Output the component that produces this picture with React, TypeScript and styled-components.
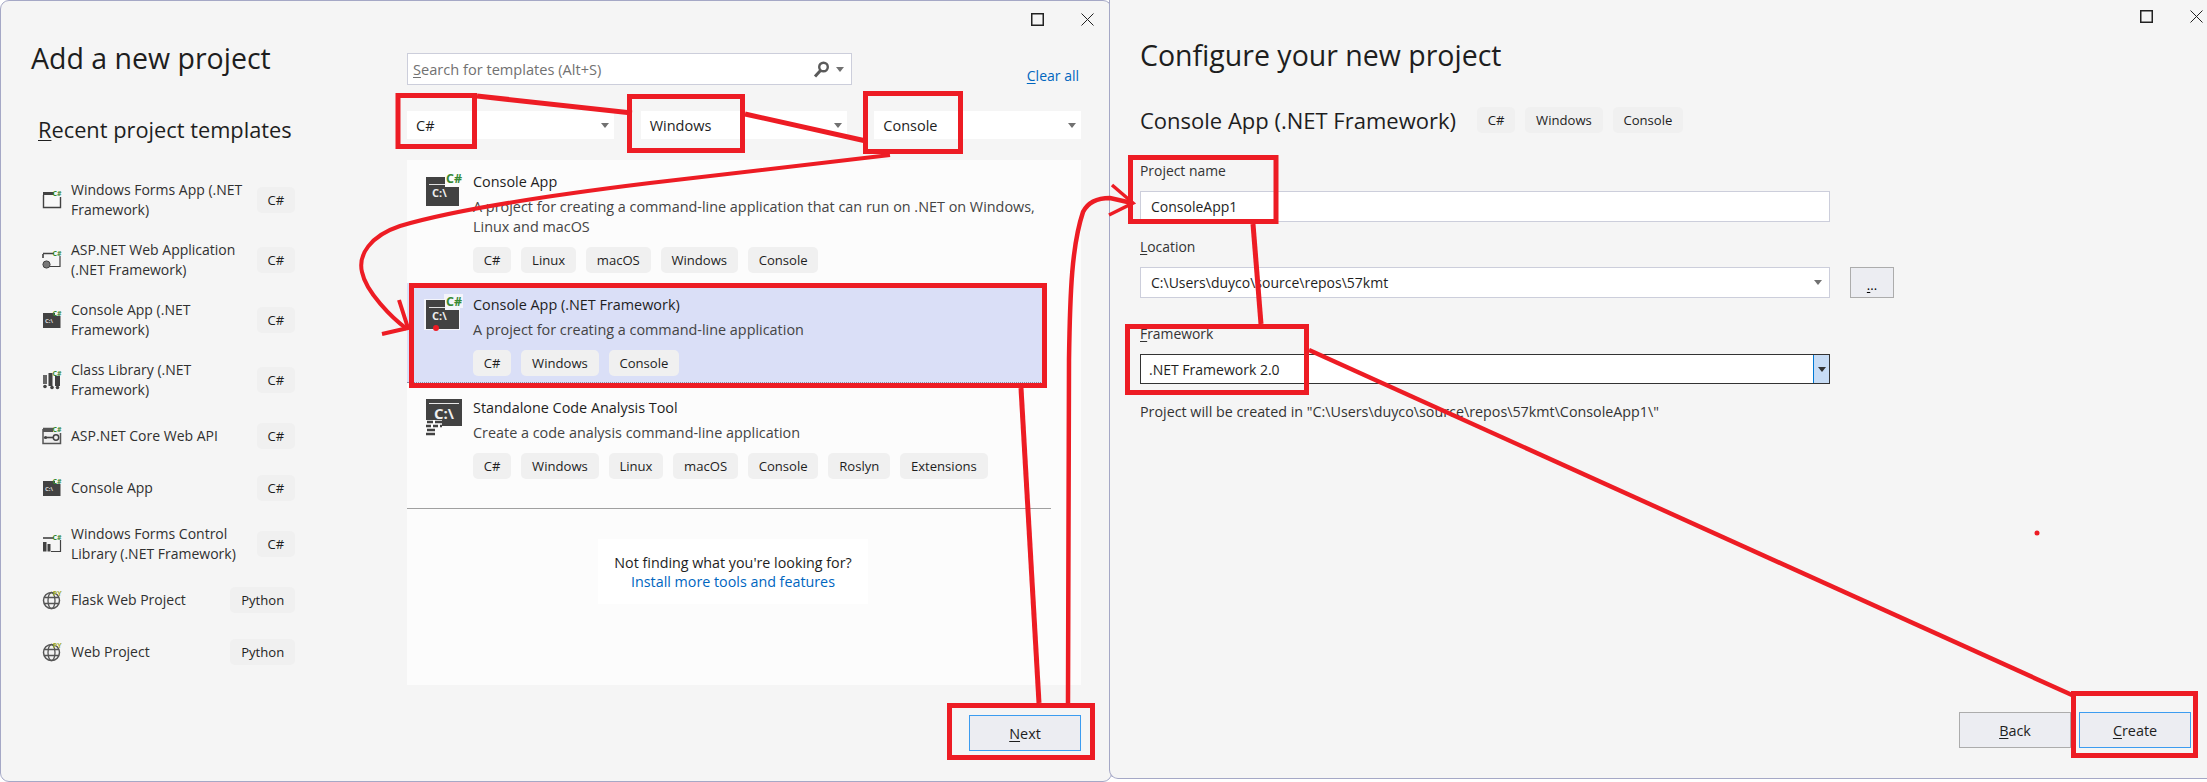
import React from "react";
import styled, { createGlobalStyle } from "styled-components";

const Global = createGlobalStyle`
  html, body { margin: 0; padding: 0; background: #fff; }
  * { box-sizing: border-box; }
  body { font-family: "Open Sans", "Noto Sans", "Liberation Sans", sans-serif; color: #1e1e1e; }
  u { text-underline-offset: 2px; text-decoration-thickness: 1px; }
`;

const Page = styled.div`
  position: relative;
  display: flex;
  align-items: flex-start;
  width: 2207px;
  height: 782px;
  overflow: hidden;
  background: #fff;
`;

const LeftWindow = styled.section`
  display: flex;
  flex: none;
  width: 1112px;
  height: 782px;
  padding-right: 3px;
  background: #f5f5f5;
  border: 1px solid #a5a8c6;
  border-radius: 9px;
`;

const RightWindow = styled.section`
  position: relative;
  display: flex;
  flex: none;
  flex-direction: column;
  width: 1098px;
  height: 779px;
  margin-left: -3px;
  padding: 0 16px 30px 30px;
  background: #f5f5f5;
  border-left: 1px solid #a5a8c6;
  border-bottom: 1px solid #a5a8c6;
  border-bottom-left-radius: 9px;
`;

const Sidebar = styled.aside`
  flex: none;
  width: 406px;
  padding: 37px 0 0 30px;
`;

const PageTitle = styled.h1`
  margin: 0;
  font-size: 28.500px;
  font-weight: 400;
  line-height: 40px;
  white-space: nowrap;
`;

const RecentHeading = styled.h2`
  margin: 37px 0 25px 7px;
  font-size: 21.800px;
  font-weight: 400;
  line-height: 30px;
  white-space: nowrap;
`;

const RecentList = styled.ul`
  margin: 0;
  padding: 0 0 0 11px;
  list-style: none;
  width: 264px;
`;

const RecentRow = styled.li<{ $tall?: boolean }>`
  display: flex;
  align-items: center;
  height: ${(p) => (p.$tall ? 60 : 52)}px;
`;

const RecentIcon = styled.svg`
  flex: none;
  width: 20px;
  height: 20px;
  margin-right: 9px;
  overflow: visible;
`;

const RecentName = styled.span`
  flex: 1;
  font-size: 14px;
  line-height: 20px;
  color: #303030;
  white-space: nowrap;
`;

const Tag = styled.span`
  display: inline-flex;
  flex: none;
  align-items: center;
  height: 26px;
  padding: 0 10.800px;
  font-size: 13.100px;
  color: #1e1e1e;
  background: #f0f0f0;
  border-radius: 5px;
  white-space: nowrap;
`;

const Main = styled.main`
  display: flex;
  flex: 1;
  flex-direction: column;
  padding: 12px 27px 0 0;
  min-width: 0;
`;

const WindowControls = styled.div<{ $gap: number; $inset: number }>`
  display: flex;
  flex: none;
  justify-content: flex-end;
  gap: ${(p) => p.$gap}px;
  height: 12px;
  margin-right: ${(p) => p.$inset}px;
`;

const RightControls = styled(WindowControls)`
  margin-top: 10px;
`;

const ControlIcon = styled.svg`
  width: 13px;
  height: 13px;
  overflow: visible;
`;

const SearchRow = styled.div`
  display: flex;
  flex: none;
  height: 32px;
  margin-top: 28px;
`;

const SearchBox = styled.div`
  display: flex;
  align-items: center;
  width: 445px;
  padding: 0 7px 0 5px;
  background: #fff;
  border: 1px solid #cccedb;
`;

const Placeholder = styled.span`
  flex: 1;
  font-size: 14.600px;
  color: #717171;
  white-space: nowrap;
`;

const SearchIcon = styled.svg`
  width: 18px;
  height: 17px;
  margin-right: 6px;
`;

const Caret = styled.i<{ $dark?: boolean }>`
  flex: none;
  width: 0;
  height: 0;
  border-left: 4px solid transparent;
  border-right: 4px solid transparent;
  border-top: 5px solid ${(p) => (p.$dark ? "#333" : "#717171")};
`;

const ClearAll = styled.a`
  align-self: flex-end;
  margin: 0 2px -1px auto;
  font-size: 14px;
  line-height: 20px;
  color: #0066bf;
  text-decoration: none;
  white-space: nowrap;
`;

const FilterRow = styled.div`
  display: grid;
  flex: none;
  grid-template-columns: repeat(3, 1fr);
  gap: 27px;
  height: 28px;
  margin-top: 26px;
`;

const FilterCombo = styled.div`
  display: flex;
  align-items: center;
  justify-content: space-between;
  padding: 0 5px 0 9px;
  font-size: 14.500px;
  background: #fff;
`;

const TemplateList = styled.div`
  flex: none;
  height: 525px;
  margin-top: 21px;
  background: #fcfcfc;
`;

const Template = styled.article<{ $selected?: boolean }>`
  display: flex;
  width: 640px;
  padding: 12px 10px ${(p) => (p.$selected ? 6 : 10)}px 19px;
  margin-bottom: ${(p) => (p.$selected ? 3 : 0)}px;
  background: ${(p) => (p.$selected ? "#dadff7" : "transparent")};
  border-bottom: ${(p) => (p.$selected ? "1px dotted #8a8fa8" : "none")};
`;

const TemplateIcon = styled.svg`
  flex: none;
  width: 36px;
  height: 34px;
  margin: 1px 11px 0 0;
  overflow: visible;
`;

const TemplateBody = styled.div`
  flex: 1;
  min-width: 0;
`;

const TemplateName = styled.div`
  font-size: 14.400px;
  line-height: 20px;
  white-space: nowrap;
`;

const TemplateDesc = styled.div`
  margin-top: 5px;
  font-size: 14.400px;
  line-height: 20px;
  color: #444;
  white-space: nowrap;
`;

const TagRow = styled.div`
  display: flex;
  gap: 10px;
  margin-top: 10px;
`;

const ListDivider = styled.hr`
  width: 644px;
  height: 1px;
  margin: 19px 0 0;
  background: #a0a0a0;
  border: 0;
`;

const NotFinding = styled.div`
  display: flex;
  flex-direction: column;
  align-items: center;
  justify-content: center;
  width: 270px;
  height: 65px;
  margin: 30px 0 0 191px;
  font-size: 14.300px;
  line-height: 19px;
  background: #fff;
`;

const InstallLink = styled.a`
  color: #0066bf;
  text-decoration: none;
`;

const Footer = styled.div<{ $auto?: boolean }>`
  display: flex;
  flex: none;
  justify-content: flex-end;
  gap: 8px;
  margin-top: ${(p) => (p.$auto ? "auto" : "30px")};
`;

const DialogButton = styled.button<{ $primary?: boolean }>`
  width: 112px;
  height: 36px;
  padding: 0;
  font: inherit;
  font-size: 14.400px;
  color: #1e1e1e;
  background: #ecedf2;
  border: 1px solid ${(p) => (p.$primary ? "#3c9cf0" : "#acacac")};
`;

const ConfigTitle = styled(PageTitle)`
  margin-top: 13px;
`;

const SubtitleRow = styled.div`
  display: flex;
  align-items: center;
  gap: 10px;
  height: 26px;
  margin-top: 32px;
`;

const Subtitle = styled.h2`
  margin: 0 11px 0 0;
  font-size: 22px;
  font-weight: 400;
  white-space: nowrap;
`;

const FieldLabel = styled.label<{ $top: number }>`
  display: block;
  margin-top: ${(p) => p.$top}px;
  font-size: 13.900px;
  line-height: 20px;
  color: #333;
`;

const FieldRow = styled.div`
  display: flex;
  margin-top: 10px;
`;

const Field = styled.div<{ $focus?: boolean; $h?: number }>`
  display: flex;
  align-items: center;
  width: 690px;
  height: ${(p) => p.$h ?? 31}px;
  padding: 0 ${(p) => (p.$focus ? 0 : 7)}px 0 ${(p) => (p.$focus ? 8 : 10)}px;
  font-size: 14px;
  background: #fff;
  border: 1px solid ${(p) => (p.$focus ? "#333" : "#cccedb")};
`;

const FieldValue = styled.span`
  flex: 1;
  white-space: nowrap;
`;

const DropButton = styled.span`
  display: flex;
  flex: none;
  align-items: center;
  justify-content: center;
  align-self: stretch;
  width: 16px;
  background: #c7dcf5;
  border-left: 1px solid #0078d4;
`;

const BrowseButton = styled.button`
  width: 44px;
  height: 31px;
  margin-left: 20px;
  padding: 6px 0 0;
  font: inherit;
  font-size: 13px;
  line-height: 1;
  background: #ecedf2;
  border: 1px solid #acacac;
`;

const CreatedIn = styled.p`
  margin: 18px 0 0;
  font-size: 14.300px;
  line-height: 20px;
  color: #333;
  white-space: nowrap;
`;

const Annotations = styled.svg`
  position: absolute;
  top: 0;
  left: 0;
  width: 2207px;
  height: 782px;
  pointer-events: none;
`;

const GREEN = "#388a34";
const DARK = "#424242";
const OLIVE = "#a2ad33";

const SmallBadge = ({ text = "C#", color = GREEN }: { text?: string; color?: string }) => (
  <text x="19.500" y="5.500" textAnchor="end" fontSize="7" fontWeight="700" fontFamily="Open Sans, sans-serif" fill={color}>
    {text}
  </text>
);

type SmallKind = "forms" | "web" | "console" | "lib" | "api" | "control" | "globe";

const SmallGlyph = ({ kind }: { kind: SmallKind }) => {
  switch (kind) {
    case "forms":
      return (
        <g>
          <rect x="1" y="2" width="11" height="3" fill={DARK} />
          <path d="M1.500 5v12.500h17V7" fill="#f8f8f8" stroke={DARK} strokeWidth="1.400" />
          <SmallBadge />
        </g>
      );
    case "web":
      return (
        <g>
          <path d="M1 3.500h11M1 4v4" stroke={DARK} strokeWidth="1.600" fill="none" />
          <path d="M18 6v10.500H8" stroke={DARK} strokeWidth="1.200" fill="none" />
          <circle cx="4.500" cy="14.500" r="3.600" fill="#777" stroke={DARK} />
          <SmallBadge />
        </g>
      );
    case "console":
      return (
        <g>
          <path d="M1 3h12v3h5.500v12H1z" fill={DARK} />
          <text x="3" y="13" fontSize="6" fontWeight="700" fontFamily="Open Sans, sans-serif" fill="#ddd">C:\</text>
          <SmallBadge />
        </g>
      );
    case "lib":
      return (
        <g>
          <rect x="1" y="5" width="4" height="9" fill="#666" />
          <rect x="6.500" y="3" width="4" height="13" fill={DARK} />
          <rect x="13" y="6" width="5" height="10" fill={DARK} />
          <circle cx="3" cy="16.500" r="1.800" fill={DARK} />
          <circle cx="10" cy="17.500" r="1.800" fill={DARK} />
          <circle cx="15.500" cy="17.500" r="1.800" fill={DARK} />
          <SmallBadge />
        </g>
      );
    case "api":
      return (
        <g>
          <path d="M1 2.500h11M1 3v14.500h17.500V7" fill="#eee" stroke="#555" strokeWidth="1.500" />
          <rect x="1" y="3" width="10" height="3" fill="#555" />
          <path d="M4 11.500h7" stroke={DARK} strokeWidth="1.600" />
          <circle cx="3.500" cy="11.500" r="1.600" fill={DARK} />
          <circle cx="14" cy="11.500" r="2.700" fill="none" stroke={DARK} strokeWidth="1.500" />
          <SmallBadge />
        </g>
      );
    case "control":
      return (
        <g>
          <path d="M1 4h11" stroke={DARK} strokeWidth="1.600" />
          <path d="M18.500 6v11.500H9" stroke={DARK} strokeWidth="1.200" fill="none" />
          <rect x="1" y="8" width="3.500" height="9.500" fill={DARK} />
          <rect x="5.500" y="10" width="3" height="7.500" fill={DARK} />
          <SmallBadge />
        </g>
      );
    default:
      return (
        <g>
          <circle cx="9.500" cy="10.500" r="8" fill="#f3f3f3" stroke="#555" strokeWidth="1.500" />
          <ellipse cx="9.500" cy="10.500" rx="3.500" ry="8" fill="none" stroke="#555" strokeWidth="1.300" />
          <path d="M2 7.500h15M2 13.500h15" stroke="#555" strokeWidth="1.300" />
          <SmallBadge text="PY" color={OLIVE} />
        </g>
      );
  }
};

const recent: { lines: string[]; kind: SmallKind; tag: string }[] = [
  { lines: ["Windows Forms App (.NET", "Framework)"], kind: "forms", tag: "C#" },
  { lines: ["ASP.NET Web Application", "(.NET Framework)"], kind: "web", tag: "C#" },
  { lines: ["Console App (.NET", "Framework)"], kind: "console", tag: "C#" },
  { lines: ["Class Library (.NET", "Framework)"], kind: "lib", tag: "C#" },
  { lines: ["ASP.NET Core Web API"], kind: "api", tag: "C#" },
  { lines: ["Console App"], kind: "console", tag: "C#" },
  { lines: ["Windows Forms Control", "Library (.NET Framework)"], kind: "control", tag: "C#" },
  { lines: ["Flask Web Project"], kind: "globe", tag: "Python" },
  { lines: ["Web Project"], kind: "globe", tag: "Python" },
];

const ConsoleGlyph = ({ halo }: { halo?: boolean }) => (
  <TemplateIcon viewBox="0 0 36 34">
    {halo && <path d="M-2 3h20V-2h19v14h-3v22H-2z" fill="#f4f5fb" />}
    <path d="M0 4h19v10h14v19H0z" fill={DARK} />
    <path d="M3 11.500h27" stroke="#e0e0e0" strokeWidth="1" />
    <text x="6" y="24" fontSize="11" fontWeight="700" fontFamily="Open Sans, sans-serif" fill="#eee">C:\</text>
    <rect x="19" y="-1" width="17" height="13" fill={halo ? "#f4f5fb" : "#fcfcfc"} />
    <text x="36" y="10" textAnchor="end" fontSize="12.500" fontWeight="700" fontFamily="Open Sans, sans-serif" fill={GREEN}>C#</text>
  </TemplateIcon>
);

const AnalysisGlyph = () => (
  <TemplateIcon viewBox="0 0 36 34">
    <rect x="0" y="0" width="36" height="27" fill={DARK} />
    <path d="M3 4.500h30" stroke="#e8e8e8" strokeWidth="1" />
    <text x="8" y="20" fontSize="15" fontWeight="700" fontFamily="Open Sans, sans-serif" fill="#eee">C:\</text>
    <path d="M0 21h16v14H0z" fill="#fcfcfc" />
    <path d="M1 23h6M9 23h7M0 27h5M7 27h5M14 27h2M1 31h8M0 35h9" stroke={DARK} strokeWidth="2.500" />
  </TemplateIcon>
);

const Red = "#ed1c24";

const Markup = () => (
  <Annotations viewBox="0 0 2207 782">
    <g fill="none" stroke={Red} strokeWidth="5" strokeLinejoin="miter">
      <rect x="398" y="95.500" width="76.500" height="51" />
      <rect x="629.500" y="96.500" width="113" height="54" />
      <rect x="865.500" y="93.500" width="95" height="58" />
      <rect x="411.500" y="285.500" width="633" height="100" />
      <rect x="949.500" y="705.500" width="143" height="52" />
      <rect x="1130.500" y="157.500" width="145.500" height="64" />
      <rect x="1127.500" y="326.500" width="179" height="66" />
      <rect x="2073.500" y="693.500" width="122" height="62" />
      <path d="M477 96 L632 113" />
      <path d="M745 114 L866 141" />
      <path d="M890 155 L650 183 Q470 205 400 226 C370 236 358 255 362 272 C366 292 392 318 407 329" strokeWidth="4" />
      <path d="M399 300 L408 328 L382 334" strokeWidth="4" />
      <path d="M1021 388 L1039 703" />
      <path d="M1068 703 L1069 360 C1070 290 1072 245 1083 212 Q1090 198 1110 198 L1132 203" strokeWidth="4.500" />
      <path d="M1112 185 L1133 203 L1109 215" strokeWidth="3.500" />
      <path d="M1253 224 L1261 324" />
      <path d="M1309 350 L2072 695" strokeWidth="4.500" />
    </g>
    <circle cx="436" cy="328" r="3" fill={Red} />
    <circle cx="2037" cy="533" r="2.500" fill={Red} />
  </Annotations>
);

const Maximize = () => (
  <ControlIcon viewBox="0 0 13 13">
    <rect x="0.750" y="0.750" width="11.500" height="11.500" fill="none" stroke="#222" strokeWidth="1.500" />
  </ControlIcon>
);

const Close = () => (
  <ControlIcon viewBox="0 0 13 13">
    <path d="M0.500 0.500l12 12M12.500 0.500l-12 12" stroke="#222" strokeWidth="1" fill="none" />
  </ControlIcon>
);

export default function App() {
  return (
    <Page>
      <Global />
      <LeftWindow>
        <Sidebar>
          <PageTitle>Add a new project</PageTitle>
          <RecentHeading>
            <u>R</u>ecent project templates
          </RecentHeading>
          <RecentList>
            {recent.map((r, i) => (
              <RecentRow key={i} $tall={r.lines.length > 1}>
                <RecentIcon viewBox="0 0 20 20">
                  <SmallGlyph kind={r.kind} />
                </RecentIcon>
                <RecentName>
                  {r.lines.map((l, j) => (
                    <React.Fragment key={j}>
                      {j > 0 && <br />}
                      {l}
                    </React.Fragment>
                  ))}
                </RecentName>
                <Tag>{r.tag}</Tag>
              </RecentRow>
            ))}
          </RecentList>
        </Sidebar>
        <Main>
          <WindowControls $gap={37} $inset={-13}>
            <Maximize />
            <Close />
          </WindowControls>
          <SearchRow>
            <SearchBox>
              <Placeholder>
                <u>S</u>earch for templates (Alt+S)
              </Placeholder>
              <SearchIcon viewBox="0 0 18 17">
                <circle cx="11.500" cy="6" r="4.300" fill="none" stroke="#5a5a5a" strokeWidth="2.400" />
                <path d="M8.500 9.500L3 15.500" stroke="#5a5a5a" strokeWidth="3" />
              </SearchIcon>
              <Caret />
            </SearchBox>
            <ClearAll>
              <u>C</u>lear all
            </ClearAll>
          </SearchRow>
          <FilterRow>
            <FilterCombo>
              C#
              <Caret />
            </FilterCombo>
            <FilterCombo>
              Windows
              <Caret />
            </FilterCombo>
            <FilterCombo>
              Console
              <Caret />
            </FilterCombo>
          </FilterRow>
          <TemplateList>
            <Template>
              <ConsoleGlyph />
              <TemplateBody>
                <TemplateName>Console App</TemplateName>
                <TemplateDesc>
                  A project for creating a command-line application that can run on .NET on Windows,
                  <br />
                  Linux and macOS
                </TemplateDesc>
                <TagRow>
                  <Tag>C#</Tag>
                  <Tag>Linux</Tag>
                  <Tag>macOS</Tag>
                  <Tag>Windows</Tag>
                  <Tag>Console</Tag>
                </TagRow>
              </TemplateBody>
            </Template>
            <Template $selected>
              <ConsoleGlyph halo />
              <TemplateBody>
                <TemplateName>Console App (.NET Framework)</TemplateName>
                <TemplateDesc>A project for creating a command-line application</TemplateDesc>
                <TagRow>
                  <Tag>C#</Tag>
                  <Tag>Windows</Tag>
                  <Tag>Console</Tag>
                </TagRow>
              </TemplateBody>
            </Template>
            <Template>
              <AnalysisGlyph />
              <TemplateBody>
                <TemplateName>Standalone Code Analysis Tool</TemplateName>
                <TemplateDesc>Create a code analysis command-line application</TemplateDesc>
                <TagRow>
                  <Tag>C#</Tag>
                  <Tag>Windows</Tag>
                  <Tag>Linux</Tag>
                  <Tag>macOS</Tag>
                  <Tag>Console</Tag>
                  <Tag>Roslyn</Tag>
                  <Tag>Extensions</Tag>
                </TagRow>
              </TemplateBody>
            </Template>
            <ListDivider />
            <NotFinding>
              Not finding what you're looking for?
              <InstallLink>Install more tools and features</InstallLink>
            </NotFinding>
          </TemplateList>
          <Footer>
            <DialogButton $primary>
              <u>N</u>ext
            </DialogButton>
          </Footer>
        </Main>
      </LeftWindow>
      <RightWindow>
        <RightControls $gap={37} $inset={-12}>
          <Maximize />
          <Close />
        </RightControls>
        <ConfigTitle>Configure your new project</ConfigTitle>
        <SubtitleRow>
          <Subtitle>Console App (.NET Framework)</Subtitle>
          <Tag>C#</Tag>
          <Tag>Windows</Tag>
          <Tag>Console</Tag>
        </SubtitleRow>
        <FieldLabel $top={28}>Project name</FieldLabel>
        <FieldRow>
          <Field>
            <FieldValue>ConsoleApp1</FieldValue>
          </Field>
        </FieldRow>
        <FieldLabel $top={15}>
          <u>L</u>ocation
        </FieldLabel>
        <FieldRow>
          <Field>
            <FieldValue>C:\Users\duyco\source\repos\57kmt</FieldValue>
            <Caret />
          </Field>
          <BrowseButton>
            <u>.</u>..
          </BrowseButton>
        </FieldRow>
        <FieldLabel $top={26}>
          <u>F</u>ramework
        </FieldLabel>
        <FieldRow>
          <Field $focus $h={30}>
            <FieldValue>.NET Framework 2.0</FieldValue>
            <DropButton>
              <Caret $dark />
            </DropButton>
          </Field>
        </FieldRow>
        <CreatedIn>Project will be created in "C:\Users\duyco\source\repos\57kmt\ConsoleApp1\"</CreatedIn>
        <Footer $auto>
          <DialogButton>
            <u>B</u>ack
          </DialogButton>
          <DialogButton $primary>
            <u>C</u>reate
          </DialogButton>
        </Footer>
      </RightWindow>
      <Markup />
    </Page>
  );
}
